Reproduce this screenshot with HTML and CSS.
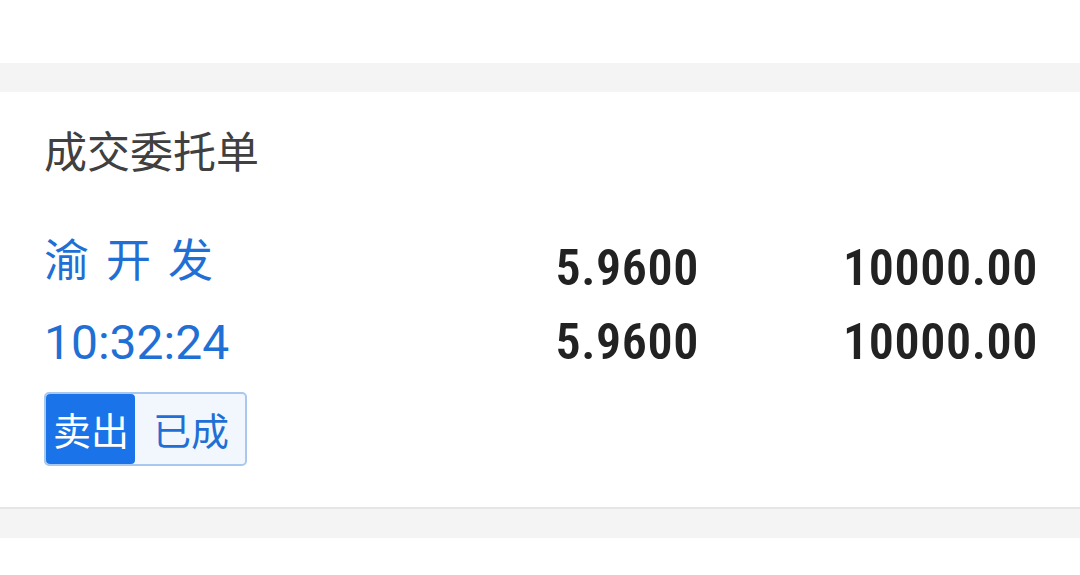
FILE: index.html
```html
<!DOCTYPE html>
<html lang="zh-CN">
<head>
  <meta charset="UTF-8">
  <title>成交委托单</title>
  <link rel="stylesheet" href="styles.css">
</head>
<body>
  <div class="top"></div>
  <div class="gap"></div>
  <div class="card">
    <h3 class="title">成交委托单</h3>
    <div class="rows">
      <div class="name">渝开发</div>
      <div class="num">5.9600</div>
      <div class="num">10000.00</div>
      <div class="time">10:32:24</div>
      <div class="num">5.9600</div>
      <div class="num">10000.00</div>
    </div>
    <div class="tag">
      <span class="side">卖出</span>
      <span class="status">已成</span>
    </div>
  </div>
  <div class="gap"></div>
</body>
</html>
```

FILE: styles.css
```css
body { margin: 0; background: #fff; font-family: "Noto Sans CJK SC", sans-serif; }
.top { height: 63px; background: #fff; }
.gap { height: 29px; background: #f4f4f4; }
.card { background: #fff; padding: 27px 44px 41px; border-bottom: 2px solid #e6e6e6; }
.title { margin: 0; font-size: 43px; font-weight: normal; line-height: 60px; color: #404040; }
.rows { display: grid; grid-template-columns: 1fr auto 339px; grid-auto-rows: 74px; align-items: center; margin-top: 52px; }
.name { font-size: 45px; letter-spacing: 17px; color: #1f6fd4; margin-top: -22px; }
.time { font-family: Roboto, sans-serif; font-size: 48px; color: #1f6fd4; }
.num { font-family: "Roboto Condensed", "Liberation Sans Narrow", "DejaVu Sans Condensed", sans-serif; font-weight: 600; font-size: 50px; letter-spacing: 0.6px; color: #222; text-align: right; margin-right: -2px; }
.tag { display: inline-flex; margin-top: 13px; border: 2px solid #a9c8ee; border-radius: 5px; background: #f2f7fe; }
.tag span { font-size: 38px; line-height: 70px; }
.side { background: #1a73e8; color: #fff; border-radius: 4px; padding: 0 6px 0 7px; }
.status { color: #1f6fd4; padding: 0 16px 0 18px; }
```
